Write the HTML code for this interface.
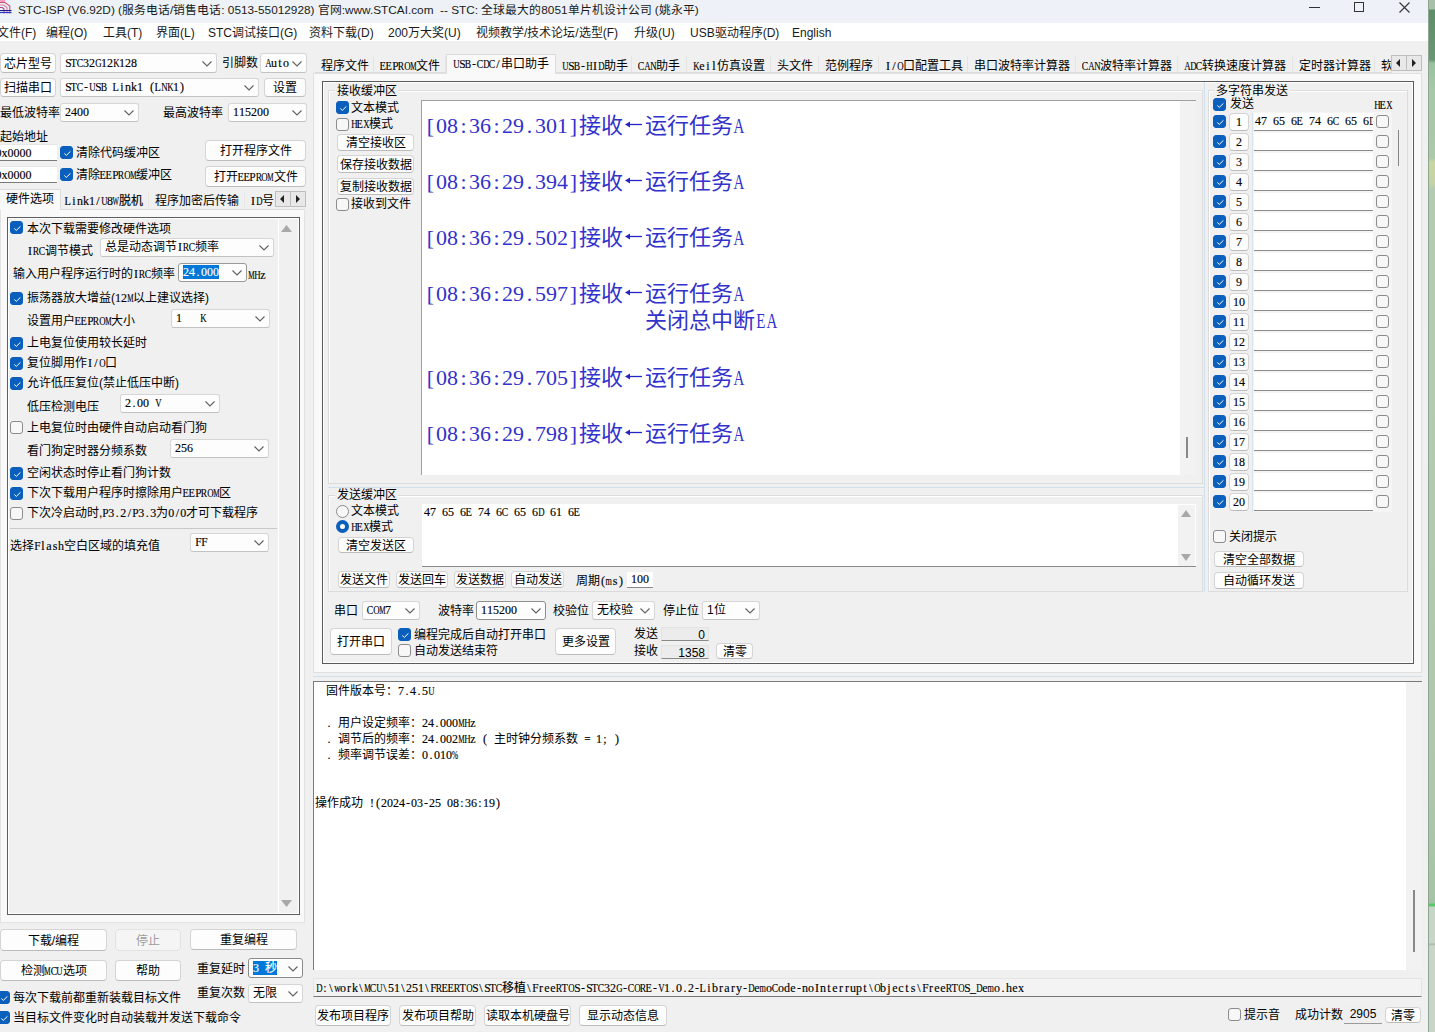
<!DOCTYPE html><html lang="zh-CN"><head><meta charset="utf-8"><title>STC-ISP</title><style>
*{margin:0;padding:0;box-sizing:border-box}
html,body{width:1435px;height:1032px;overflow:hidden;background:#f0f0f0}
body{position:relative;font-family:"Liberation Sans",sans-serif;font-size:12px;color:#000}
div{position:absolute;white-space:nowrap}
.u{font-family:"Liberation Sans",sans-serif;font-size:12px;line-height:14px}
.m{font-family:"Liberation Serif",serif;font-size:12px;letter-spacing:0;-webkit-text-stroke:0.15px}
.m i{font-style:normal;display:inline-flex;justify-content:center;width:6px}
.m i b{font-weight:normal;display:block}
.btn > span.u{position:relative;top:1px}
.btn{background:#fdfdfd;border:1px solid #d4d4d4;border-bottom-color:#bcbcbc;border-radius:4px;text-align:center}
.btn.dis{background:#f5f5f5;border-color:#e2e2e2;color:#9d9d9d}
.combo{background:#fdfdfd;border:1px solid #d6d6d6;border-bottom-color:#c2c2c2;border-radius:3px}
.edit{background:#fff;border-bottom:1px solid #8a8a8a;overflow:hidden}
.cbx{width:13px;height:13px;border:1px solid #8c8c8c;border-radius:3px;background:#f7f7f7}
.cbx.on{background:#0a5fbd;border-color:#0a5fbd}
.rad{width:13px;height:13px;border:1px solid #8c8c8c;border-radius:50%;background:#f7f7f7}
.rad.on{background:#fff;border:4px solid #0a5fbd}
.sel{background:#0078d7;color:#fff}
.rx{font-family:"Liberation Serif",serif;font-size:22px;color:#3232cc;line-height:28px}
.rx i{font-style:normal;display:inline-flex;justify-content:center}
</style></head><body><div style="left:0px;top:0px;width:1428px;height:23px;background:linear-gradient(90deg,#edf2f6,#eef1f8)"></div>
<svg style="position:absolute;left:0;top:0" width="12" height="15" viewBox="0 0 12 15"><rect x="0" y="0" width="5" height="2.5" fill="#f39cbc"/><path d="M0 2.5 H5 L9.8 6 V13.5" stroke="#c8507a" fill="none" stroke-width="1.1"/><path d="M0 5 H3.5 L7 7.5 V13.5" stroke="#e07aa0" fill="none" stroke-width="1.1"/><path d="M0 7.5 H2.5 L4 9 V13.5" stroke="#a04a90" fill="none" stroke-width="1.1"/><rect x="0" y="10" width="11.5" height="1.1" fill="#1c1c8c"/><rect x="0" y="12" width="11.5" height="1.1" fill="#2a3ac8"/></svg>
<div class="u" style="left:18px;top:3px;color:#1a1a1a;font-size:11.8px">STC-ISP (V6.92D) (服务电话/销售电话: 0513-55012928) 官网:www.STCAI.com&nbsp; -- STC: 全球最大的8051单片机设计公司 (姚永平)</div>
<div style="left:1309px;top:7px;width:11px;height:1px;background:#333"></div>
<div style="left:1354px;top:2px;width:10px;height:10px;border:1px solid #333"></div>
<svg style="position:absolute;left:1399px;top:2px" width="11" height="11" viewBox="0 0 11 11"><path d="M0.5 0.5 L10.5 10.5 M10.5 0.5 L0.5 10.5" stroke="#333" stroke-width="1.1"/></svg>
<div style="left:0px;top:23px;width:1428px;height:18px;background:#ffffff"></div>
<div class="u" style="left:-3px;top:26px;font-size:12px;color:#1a1a1a">文件(F)</div>
<div class="u" style="left:46px;top:26px;font-size:12px;color:#1a1a1a">编程(O)</div>
<div class="u" style="left:103px;top:26px;font-size:12px;color:#1a1a1a">工具(T)</div>
<div class="u" style="left:156px;top:26px;font-size:12px;color:#1a1a1a">界面(L)</div>
<div class="u" style="left:208px;top:26px;font-size:12px;color:#1a1a1a">STC调试接口(G)</div>
<div class="u" style="left:309px;top:26px;font-size:12px;color:#1a1a1a">资料下载(D)</div>
<div class="u" style="left:388px;top:26px;font-size:12px;color:#1a1a1a">200万大奖(U)</div>
<div class="u" style="left:476px;top:26px;font-size:12px;color:#1a1a1a">视频教学/技术论坛/选型(F)</div>
<div class="u" style="left:634px;top:26px;font-size:12px;color:#1a1a1a">升级(U)</div>
<div class="u" style="left:690px;top:26px;font-size:12px;color:#1a1a1a">USB驱动程序(D)</div>
<div class="u" style="left:792px;top:26px;font-size:12px;color:#1a1a1a">English</div>
<div style="left:1428px;top:0px;width:7px;height:1032px;background:linear-gradient(#a9bfaa 0,#a9bfaa 9px,#5e8d69 10px,#6a9775 60px,#98c29d 63px,#a8c8a8 90px,#acc9a9 158px,#c9d5a2 162px,#c5d3a5 183px,#b3cbb2 190px,#b2cab2 520px,#afc7af 780px,#a5c3a6 903px,#56cc66 904px,#56cc66 906px,#c8d5c9 907px,#c8d5c9 943px,#a9b5aa 944px,#c9d5ca 946px,#c9d5ca 1032px);box-shadow:inset 1px 0 0 #8ea58f"></div>
<div class="btn" style="left:0px;top:53px;width:56px;height:20px;line-height:18px;font-size:12px"><span class="u">芯片型号</span></div>
<div class="combo" style="left:60px;top:53px;width:157px;height:20px;line-height:18px;"><span class="m" style="position:absolute;left:4px;top:0px"><i><b style="transform:scaleX(0.953)">S</b></i><i><b style="transform:scaleX(0.868)">T</b></i><i><b style="transform:scaleX(0.795)">C</b></i><i>3</i><i>2</i><i><b style="transform:scaleX(0.734)">G</b></i><i>1</i><i>2</i><i><b style="transform:scaleX(0.734)">K</b></i><i>1</i><i>2</i><i>8</i></span><svg style="position:absolute;right:4px;top:7px" width="10" height="6" viewBox="0 0 10 6"><path d="M0.5 0.5 L5 5 L9.5 0.5" fill="none" stroke="#606060" stroke-width="1.1"/></svg></div>
<div class="u" style="left:222px;top:56px;font-size:12px">引脚数</div>
<div class="combo" style="left:260px;top:53px;width:47px;height:20px;line-height:18px;"><span class="m" style="position:absolute;left:4px;top:0px"><i><b style="transform:scaleX(0.734)">A</b></i><i>u</i><i>t</i><i>o</i></span><svg style="position:absolute;right:4px;top:7px" width="10" height="6" viewBox="0 0 10 6"><path d="M0.5 0.5 L5 5 L9.5 0.5" fill="none" stroke="#606060" stroke-width="1.1"/></svg></div>
<div class="btn" style="left:0px;top:78px;width:56px;height:19px;line-height:17px;font-size:12px"><span class="u">扫描串口</span></div>
<div class="combo" style="left:60px;top:78px;width:199px;height:19px;line-height:17px;"><span class="m" style="position:absolute;left:4px;top:0px"><i><b style="transform:scaleX(0.953)">S</b></i><i><b style="transform:scaleX(0.868)">T</b></i><i><b style="transform:scaleX(0.795)">C</b></i><i>-</i><i><b style="transform:scaleX(0.734)">U</b></i><i><b style="transform:scaleX(0.953)">S</b></i><i><b style="transform:scaleX(0.795)">B</b></i><i>&nbsp;</i><i><b style="transform:scaleX(0.868)">L</b></i><i>i</i><i>n</i><i>k</i><i>1</i><i>&nbsp;</i><i>(</i><i><b style="transform:scaleX(0.868)">L</b></i><i><b style="transform:scaleX(0.734)">N</b></i><i><b style="transform:scaleX(0.734)">K</b></i><i>1</i><i>)</i></span><svg style="position:absolute;right:4px;top:6px" width="10" height="6" viewBox="0 0 10 6"><path d="M0.5 0.5 L5 5 L9.5 0.5" fill="none" stroke="#606060" stroke-width="1.1"/></svg></div>
<div class="btn" style="left:264px;top:78px;width:42px;height:19px;line-height:17px;font-size:12px"><span class="u">设置</span></div>
<div class="u" style="left:0px;top:106px;font-size:12px">最低波特率</div>
<div class="combo" style="left:60px;top:103px;width:79px;height:19px;line-height:17px;"><span class="m" style="position:absolute;left:4px;top:0px"><i>2</i><i>4</i><i>0</i><i>0</i></span><svg style="position:absolute;right:4px;top:6px" width="10" height="6" viewBox="0 0 10 6"><path d="M0.5 0.5 L5 5 L9.5 0.5" fill="none" stroke="#606060" stroke-width="1.1"/></svg></div>
<div class="u" style="left:163px;top:106px;font-size:12px">最高波特率</div>
<div class="combo" style="left:228px;top:103px;width:79px;height:19px;line-height:17px;"><span class="m" style="position:absolute;left:4px;top:0px"><i>1</i><i>1</i><i>5</i><i>2</i><i>0</i><i>0</i></span><svg style="position:absolute;right:4px;top:6px" width="10" height="6" viewBox="0 0 10 6"><path d="M0.5 0.5 L5 5 L9.5 0.5" fill="none" stroke="#606060" stroke-width="1.1"/></svg></div>
<div class="u" style="left:0px;top:130px;font-size:12px">起始地址</div>
<div class="edit" style="left:0px;top:144px;width:57px;height:17px;line-height:16px;text-align:left;border-bottom:1px solid #7a7a7a;border-top:1px solid #e6e6e6;text-indent:-3px"><span class="m" style="padding:0 0px"><i>0</i><i>x</i><i>0</i><i>0</i><i>0</i><i>0</i></span></div>
<div class="cbx on" style="left:60px;top:146px"><svg width="13" height="13" viewBox="0 0 13 13" style="position:absolute;left:0;top:0"><path d="M3.3 6.5 L5.3 8.4 L9.4 4.4" fill="none" stroke="#fff" stroke-width="1"/></svg></div>
<div class="u" style="left:76px;top:146px;font-size:12px">清除代码缓冲区</div>
<div class="btn" style="left:205px;top:140px;width:101px;height:21px;line-height:19px;font-size:12px"><span class="u">打开程序文件</span></div>
<div class="edit" style="left:0px;top:166px;width:57px;height:17px;line-height:16px;text-align:left;border-bottom:1px solid #7a7a7a;border-top:1px solid #e6e6e6;text-indent:-3px"><span class="m" style="padding:0 0px"><i>0</i><i>x</i><i>0</i><i>0</i><i>0</i><i>0</i></span></div>
<div class="cbx on" style="left:60px;top:168px"><svg width="13" height="13" viewBox="0 0 13 13" style="position:absolute;left:0;top:0"><path d="M3.3 6.5 L5.3 8.4 L9.4 4.4" fill="none" stroke="#fff" stroke-width="1"/></svg></div>
<div class="u" style="left:76px;top:168px;font-size:12px">清除<span class="m"><i><b style="transform:scaleX(0.868)">E</b></i><i><b style="transform:scaleX(0.868)">E</b></i><i><b style="transform:scaleX(0.953)">P</b></i><i><b style="transform:scaleX(0.795)">R</b></i><i><b style="transform:scaleX(0.734)">O</b></i><i><b style="transform:scaleX(0.596)">M</b></i></span>缓冲区</div>
<div class="btn" style="left:205px;top:166px;width:101px;height:21px;line-height:19px;font-size:12px"><span class="u">打开<span class="m"><i><b style="transform:scaleX(0.868)">E</b></i><i><b style="transform:scaleX(0.868)">E</b></i><i><b style="transform:scaleX(0.953)">P</b></i><i><b style="transform:scaleX(0.795)">R</b></i><i><b style="transform:scaleX(0.734)">O</b></i><i><b style="transform:scaleX(0.596)">M</b></i></span>文件</span></div>
<div style="left:0px;top:209px;width:305px;height:714px;background:#f9f9f9;border:1px solid #e3e3e3;border-top-color:#dcdcdc"></div>
<div style="left:0px;top:189px;width:61px;height:21px;background:#f9f9f9;border:1px solid #dcdcdc;border-bottom:none;border-left:none"></div>
<div class="u" style="left:6px;top:192px;font-size:12px">硬件选项</div>
<div style="left:61px;top:192px;width:88px;height:17px;background:#f0f0f0;border-right:1px solid #e6e6e6"></div>
<div class="m" style="left:65px;top:191px;"><i><b style="transform:scaleX(0.868)">L</b></i><i>i</i><i>n</i><i>k</i><i>1</i><i>/</i><i><b style="transform:scaleX(0.734)">U</b></i><i>8</i><i><b style="transform:scaleX(0.562)">W</b></i><i style="width:12px">脱</i><i style="width:12px">机</i></div>
<div style="left:149px;top:192px;width:96px;height:17px;background:#f0f0f0;border-right:1px solid #e6e6e6"></div>
<div class="u" style="left:155px;top:194px;font-size:12px">程序加密后传输</div>
<div style="left:245px;top:192px;width:30px;height:17px;background:#f0f0f0"></div>
<div class="u" style="left:250px;top:194px;font-size:12px"><span class="m"><i>I</i><i><b style="transform:scaleX(0.734)">D</b></i></span>号</div>
<div style="left:275px;top:191px;width:16px;height:16px;background:#e8e8e8;border:1px solid #bdbdbd"></div>
<div style="left:290px;top:191px;width:16px;height:16px;background:#e8e8e8;border:1px solid #bdbdbd"></div>
<svg style="position:absolute;left:280px;top:195px" width="6" height="8"><path d="M4 0 L0 4 L4 8Z" fill="#222"/></svg>
<svg style="position:absolute;left:296px;top:195px" width="6" height="8"><path d="M0 0 L4 4 L0 8Z" fill="#222"/></svg>
<div style="left:7px;top:217px;width:293px;height:698px;background:#f0f0f0;border:1px solid #5e5e5e;box-shadow:inset 0 0 0 1px #fff"></div>
<div style="left:278px;top:219px;width:1px;height:694px;background:#fff"></div>
<svg style="position:absolute;left:281px;top:225px" width="11" height="8"><path d="M0 7 L5.5 0 L11 7Z" fill="#a8a8a8"/></svg>
<svg style="position:absolute;left:281px;top:900px" width="11" height="8"><path d="M0 0 L5.5 7 L11 0Z" fill="#a8a8a8"/></svg>
<div class="cbx on" style="left:10px;top:221px"><svg width="13" height="13" viewBox="0 0 13 13" style="position:absolute;left:0;top:0"><path d="M3.3 6.5 L5.3 8.4 L9.4 4.4" fill="none" stroke="#fff" stroke-width="1"/></svg></div>
<div class="u" style="left:27px;top:222px;font-size:12px">本次下载需要修改硬件选项</div>
<div class="u" style="left:27px;top:244px;font-size:12px"><span class="m"><i>I</i><i><b style="transform:scaleX(0.795)">R</b></i><i><b style="transform:scaleX(0.795)">C</b></i></span>调节模式</div>
<div class="combo" style="left:100px;top:238px;width:174px;height:19px;line-height:17px;font-size:12px"><span class="u" style="position:absolute;left:4px;top:1px">总是动态调节<span class="m"><i>I</i><i><b style="transform:scaleX(0.795)">R</b></i><i><b style="transform:scaleX(0.795)">C</b></i></span>频率</span><svg style="position:absolute;right:4px;top:6px" width="10" height="6" viewBox="0 0 10 6"><path d="M0.5 0.5 L5 5 L9.5 0.5" fill="none" stroke="#606060" stroke-width="1.1"/></svg></div>
<div class="u" style="left:13px;top:267px;font-size:12px">输入用户程序运行时的<span class="m"><i>I</i><i><b style="transform:scaleX(0.795)">R</b></i><i><b style="transform:scaleX(0.795)">C</b></i></span>频率</div>
<div class="combo" style="left:178px;top:263px;width:69px;height:19px;line-height:17px;border-color:#9a9a9a"><span class="m" style="position:absolute;left:4px;top:0px"><span class="sel"><i>2</i><i>4</i><i>.</i><i>0</i><i>0</i><i>0</i></span></span><svg style="position:absolute;right:4px;top:6px" width="10" height="6" viewBox="0 0 10 6"><path d="M0.5 0.5 L5 5 L9.5 0.5" fill="none" stroke="#606060" stroke-width="1.1"/></svg></div>
<div class="m" style="left:248px;top:268px;"><i><b style="transform:scaleX(0.596)">M</b></i><i><b style="transform:scaleX(0.734)">H</b></i><i>z</i></div>
<div class="cbx on" style="left:10px;top:292px"><svg width="13" height="13" viewBox="0 0 13 13" style="position:absolute;left:0;top:0"><path d="M3.3 6.5 L5.3 8.4 L9.4 4.4" fill="none" stroke="#fff" stroke-width="1"/></svg></div>
<div class="u" style="left:27px;top:291px;font-size:12px">振荡器放大增益(<span class="m"><i>1</i><i>2</i><i><b style="transform:scaleX(0.596)">M</b></i></span>以上建议选择)</div>
<div class="u" style="left:27px;top:314px;font-size:12px">设置用户<span class="m"><i><b style="transform:scaleX(0.868)">E</b></i><i><b style="transform:scaleX(0.868)">E</b></i><i><b style="transform:scaleX(0.953)">P</b></i><i><b style="transform:scaleX(0.795)">R</b></i><i><b style="transform:scaleX(0.734)">O</b></i><i><b style="transform:scaleX(0.596)">M</b></i></span>大小</div>
<div class="combo" style="left:171px;top:309px;width:99px;height:19px;line-height:17px;"><span class="m" style="position:absolute;left:4px;top:0px"><i>1</i><i>&nbsp;</i><i>&nbsp;</i><i>&nbsp;</i><i><b style="transform:scaleX(0.734)">K</b></i></span><svg style="position:absolute;right:4px;top:6px" width="10" height="6" viewBox="0 0 10 6"><path d="M0.5 0.5 L5 5 L9.5 0.5" fill="none" stroke="#606060" stroke-width="1.1"/></svg></div>
<div class="cbx on" style="left:10px;top:337px"><svg width="13" height="13" viewBox="0 0 13 13" style="position:absolute;left:0;top:0"><path d="M3.3 6.5 L5.3 8.4 L9.4 4.4" fill="none" stroke="#fff" stroke-width="1"/></svg></div>
<div class="u" style="left:27px;top:336px;font-size:12px">上电复位使用较长延时</div>
<div class="cbx on" style="left:10px;top:357px"><svg width="13" height="13" viewBox="0 0 13 13" style="position:absolute;left:0;top:0"><path d="M3.3 6.5 L5.3 8.4 L9.4 4.4" fill="none" stroke="#fff" stroke-width="1"/></svg></div>
<div class="u" style="left:27px;top:356px;font-size:12px">复位脚用作<span class="m"><i>I</i><i>/</i><i><b style="transform:scaleX(0.734)">O</b></i></span>口</div>
<div class="cbx on" style="left:10px;top:377px"><svg width="13" height="13" viewBox="0 0 13 13" style="position:absolute;left:0;top:0"><path d="M3.3 6.5 L5.3 8.4 L9.4 4.4" fill="none" stroke="#fff" stroke-width="1"/></svg></div>
<div class="u" style="left:27px;top:376px;font-size:12px">允许低压复位(禁止低压中断)</div>
<div class="u" style="left:27px;top:400px;font-size:12px">低压检测电压</div>
<div class="combo" style="left:120px;top:394px;width:100px;height:19px;line-height:17px;"><span class="m" style="position:absolute;left:4px;top:0px"><i>2</i><i>.</i><i>0</i><i>0</i><i>&nbsp;</i><i><b style="transform:scaleX(0.734)">V</b></i></span><svg style="position:absolute;right:4px;top:6px" width="10" height="6" viewBox="0 0 10 6"><path d="M0.5 0.5 L5 5 L9.5 0.5" fill="none" stroke="#606060" stroke-width="1.1"/></svg></div>
<div class="cbx" style="left:10px;top:421px"></div>
<div class="u" style="left:27px;top:421px;font-size:12px">上电复位时由硬件自动启动看门狗</div>
<div class="u" style="left:27px;top:444px;font-size:12px">看门狗定时器分频系数</div>
<div class="combo" style="left:170px;top:439px;width:99px;height:19px;line-height:17px;"><span class="m" style="position:absolute;left:4px;top:0px"><i>2</i><i>5</i><i>6</i></span><svg style="position:absolute;right:4px;top:6px" width="10" height="6" viewBox="0 0 10 6"><path d="M0.5 0.5 L5 5 L9.5 0.5" fill="none" stroke="#606060" stroke-width="1.1"/></svg></div>
<div class="cbx on" style="left:10px;top:467px"><svg width="13" height="13" viewBox="0 0 13 13" style="position:absolute;left:0;top:0"><path d="M3.3 6.5 L5.3 8.4 L9.4 4.4" fill="none" stroke="#fff" stroke-width="1"/></svg></div>
<div class="u" style="left:27px;top:466px;font-size:12px">空闲状态时停止看门狗计数</div>
<div class="cbx on" style="left:10px;top:487px"><svg width="13" height="13" viewBox="0 0 13 13" style="position:absolute;left:0;top:0"><path d="M3.3 6.5 L5.3 8.4 L9.4 4.4" fill="none" stroke="#fff" stroke-width="1"/></svg></div>
<div class="u" style="left:27px;top:486px;font-size:12px">下次下载用户程序时擦除用户<span class="m"><i><b style="transform:scaleX(0.868)">E</b></i><i><b style="transform:scaleX(0.868)">E</b></i><i><b style="transform:scaleX(0.953)">P</b></i><i><b style="transform:scaleX(0.795)">R</b></i><i><b style="transform:scaleX(0.734)">O</b></i><i><b style="transform:scaleX(0.596)">M</b></i></span>区</div>
<div class="cbx" style="left:10px;top:507px"></div>
<div class="u" style="left:27px;top:506px;font-size:12px">下次冷启动时,<span class="m"><i><b style="transform:scaleX(0.953)">P</b></i><i>3</i><i>.</i><i>2</i><i>/</i><i><b style="transform:scaleX(0.953)">P</b></i><i>3</i><i>.</i><i>3</i></span>为<span class="m"><i>0</i><i>/</i><i>0</i></span>才可下载程序</div>
<div style="left:10px;top:528px;width:267px;height:1px;background:#c8c8c8"></div>
<div class="u" style="left:10px;top:539px;font-size:12px">选择<span class="m"><i><b style="transform:scaleX(0.953)">F</b></i><i>l</i><i>a</i><i>s</i><i>h</i></span>空白区域的填充值</div>
<div class="combo" style="left:190px;top:533px;width:79px;height:19px;line-height:17px;"><span class="m" style="position:absolute;left:4px;top:0px"><i><b style="transform:scaleX(0.953)">F</b></i><i><b style="transform:scaleX(0.953)">F</b></i></span><svg style="position:absolute;right:4px;top:6px" width="10" height="6" viewBox="0 0 10 6"><path d="M0.5 0.5 L5 5 L9.5 0.5" fill="none" stroke="#606060" stroke-width="1.1"/></svg></div>
<div class="btn" style="left:0px;top:929px;width:107px;height:22px;line-height:20px;font-size:12px"><span class="u">下载/编程</span></div>
<div class="btn dis" style="left:115px;top:929px;width:66px;height:22px;line-height:20px;font-size:12px"><span class="u">停止</span></div>
<div class="btn" style="left:190px;top:929px;width:107px;height:21px;line-height:19px;font-size:12px"><span class="u">重复编程</span></div>
<div class="btn" style="left:0px;top:960px;width:107px;height:21px;line-height:19px;font-size:12px"><span class="u">检测<span class="m"><i><b style="transform:scaleX(0.596)">M</b></i><i><b style="transform:scaleX(0.795)">C</b></i><i><b style="transform:scaleX(0.734)">U</b></i></span>选项</span></div>
<div class="btn" style="left:115px;top:960px;width:66px;height:21px;line-height:19px;font-size:12px"><span class="u">帮助</span></div>
<div class="u" style="left:197px;top:962px;font-size:12px">重复延时</div>
<div class="combo" style="left:248px;top:958px;width:55px;height:20px;line-height:18px;border-color:#8a8a8a"><span class="m" style="position:absolute;left:4px;top:0px"><span class="sel"><i>3</i><i>&nbsp;</i><i style="width:12px">秒</i></span></span><svg style="position:absolute;right:4px;top:7px" width="10" height="6" viewBox="0 0 10 6"><path d="M0.5 0.5 L5 5 L9.5 0.5" fill="none" stroke="#606060" stroke-width="1.1"/></svg></div>
<div class="u" style="left:197px;top:986px;font-size:12px">重复次数</div>
<div class="combo" style="left:248px;top:984px;width:55px;height:19px;line-height:17px;font-size:12px"><span class="u" style="position:absolute;left:4px;top:1px">无限</span><svg style="position:absolute;right:4px;top:6px" width="10" height="6" viewBox="0 0 10 6"><path d="M0.5 0.5 L5 5 L9.5 0.5" fill="none" stroke="#606060" stroke-width="1.1"/></svg></div>
<div class="cbx on" style="left:-3px;top:991px"><svg width="13" height="13" viewBox="0 0 13 13" style="position:absolute;left:0;top:0"><path d="M3.3 6.5 L5.3 8.4 L9.4 4.4" fill="none" stroke="#fff" stroke-width="1"/></svg></div>
<div class="u" style="left:13px;top:991px;font-size:12px">每次下载前都重新装载目标文件</div>
<div class="cbx on" style="left:-3px;top:1011px"><svg width="13" height="13" viewBox="0 0 13 13" style="position:absolute;left:0;top:0"><path d="M3.3 6.5 L5.3 8.4 L9.4 4.4" fill="none" stroke="#fff" stroke-width="1"/></svg></div>
<div class="u" style="left:13px;top:1011px;font-size:12px">当目标文件变化时自动装载并发送下载命令</div>
<div style="left:313px;top:73px;width:1109px;height:600px;background:#f9f9f9;border:1px solid #e0e0e0"></div>
<div style="left:315px;top:56px;width:59px;height:17px;background:#f0f0f0;border-right:1px solid #e4e4e4;border-bottom:1px solid #dcdcdc"></div>
<div class="u" style="left:321px;top:59px;font-size:12px;overflow:hidden;width:53px">程序文件</div>
<div style="left:374px;top:56px;width:72px;height:17px;background:#f0f0f0;border-right:1px solid #e4e4e4;border-bottom:1px solid #dcdcdc"></div>
<div class="u" style="left:380px;top:59px;font-size:12px;overflow:hidden;width:66px"><span class="m"><i><b style="transform:scaleX(0.868)">E</b></i><i><b style="transform:scaleX(0.868)">E</b></i><i><b style="transform:scaleX(0.953)">P</b></i><i><b style="transform:scaleX(0.795)">R</b></i><i><b style="transform:scaleX(0.734)">O</b></i><i><b style="transform:scaleX(0.596)">M</b></i></span>文件</div>
<div style="left:446px;top:54px;width:110px;height:20px;background:#f9f9f9;border:1px solid #dcdcdc;border-bottom:none"></div>
<div class="u" style="left:453px;top:57px;font-size:12px"><span class="m"><i><b style="transform:scaleX(0.734)">U</b></i><i><b style="transform:scaleX(0.953)">S</b></i><i><b style="transform:scaleX(0.795)">B</b></i><i>-</i><i><b style="transform:scaleX(0.795)">C</b></i><i><b style="transform:scaleX(0.734)">D</b></i><i><b style="transform:scaleX(0.795)">C</b></i><i>/</i></span>串口助手</div>
<div style="left:556px;top:56px;width:76px;height:17px;background:#f0f0f0;border-right:1px solid #e4e4e4;border-bottom:1px solid #dcdcdc"></div>
<div class="u" style="left:562px;top:59px;font-size:12px;overflow:hidden;width:70px"><span class="m"><i><b style="transform:scaleX(0.734)">U</b></i><i><b style="transform:scaleX(0.953)">S</b></i><i><b style="transform:scaleX(0.795)">B</b></i><i>-</i><i><b style="transform:scaleX(0.734)">H</b></i><i>I</i><i><b style="transform:scaleX(0.734)">D</b></i></span>助手</div>
<div style="left:632px;top:56px;width:55px;height:17px;background:#f0f0f0;border-right:1px solid #e4e4e4;border-bottom:1px solid #dcdcdc"></div>
<div class="u" style="left:638px;top:59px;font-size:12px;overflow:hidden;width:49px"><span class="m"><i><b style="transform:scaleX(0.795)">C</b></i><i><b style="transform:scaleX(0.734)">A</b></i><i><b style="transform:scaleX(0.734)">N</b></i></span>助手</div>
<div style="left:687px;top:56px;width:84px;height:17px;background:#f0f0f0;border-right:1px solid #e4e4e4;border-bottom:1px solid #dcdcdc"></div>
<div class="u" style="left:693px;top:59px;font-size:12px;overflow:hidden;width:78px"><span class="m"><i><b style="transform:scaleX(0.734)">K</b></i><i>e</i><i>i</i><i>l</i></span>仿真设置</div>
<div style="left:771px;top:56px;width:48px;height:17px;background:#f0f0f0;border-right:1px solid #e4e4e4;border-bottom:1px solid #dcdcdc"></div>
<div class="u" style="left:777px;top:59px;font-size:12px;overflow:hidden;width:42px">头文件</div>
<div style="left:819px;top:56px;width:60px;height:17px;background:#f0f0f0;border-right:1px solid #e4e4e4;border-bottom:1px solid #dcdcdc"></div>
<div class="u" style="left:825px;top:59px;font-size:12px;overflow:hidden;width:54px">范例程序</div>
<div style="left:879px;top:56px;width:89px;height:17px;background:#f0f0f0;border-right:1px solid #e4e4e4;border-bottom:1px solid #dcdcdc"></div>
<div class="u" style="left:885px;top:59px;font-size:12px;overflow:hidden;width:83px"><span class="m"><i>I</i><i>/</i><i><b style="transform:scaleX(0.734)">O</b></i></span>口配置工具</div>
<div style="left:968px;top:56px;width:108px;height:17px;background:#f0f0f0;border-right:1px solid #e4e4e4;border-bottom:1px solid #dcdcdc"></div>
<div class="u" style="left:974px;top:59px;font-size:12px;overflow:hidden;width:102px">串口波特率计算器</div>
<div style="left:1076px;top:56px;width:102px;height:17px;background:#f0f0f0;border-right:1px solid #e4e4e4;border-bottom:1px solid #dcdcdc"></div>
<div class="u" style="left:1082px;top:59px;font-size:12px;overflow:hidden;width:96px"><span class="m"><i><b style="transform:scaleX(0.795)">C</b></i><i><b style="transform:scaleX(0.734)">A</b></i><i><b style="transform:scaleX(0.734)">N</b></i></span>波特率计算器</div>
<div style="left:1178px;top:56px;width:115px;height:17px;background:#f0f0f0;border-right:1px solid #e4e4e4;border-bottom:1px solid #dcdcdc"></div>
<div class="u" style="left:1184px;top:59px;font-size:12px;overflow:hidden;width:109px"><span class="m"><i><b style="transform:scaleX(0.734)">A</b></i><i><b style="transform:scaleX(0.734)">D</b></i><i><b style="transform:scaleX(0.795)">C</b></i></span>转换速度计算器</div>
<div style="left:1293px;top:56px;width:82px;height:17px;background:#f0f0f0;border-right:1px solid #e4e4e4;border-bottom:1px solid #dcdcdc"></div>
<div class="u" style="left:1299px;top:59px;font-size:12px;overflow:hidden;width:76px">定时器计算器</div>
<div style="left:1375px;top:56px;width:17px;height:17px;background:#f0f0f0;border-right:1px solid #e4e4e4;border-bottom:1px solid #dcdcdc"></div>
<div class="u" style="left:1381px;top:59px;font-size:12px;overflow:hidden;width:11px">软</div>
<div style="left:1391px;top:55px;width:16px;height:16px;background:#e8e8e8;border:1px solid #bdbdbd"></div>
<div style="left:1406px;top:55px;width:16px;height:16px;background:#e8e8e8;border:1px solid #bdbdbd"></div>
<svg style="position:absolute;left:1396px;top:59px" width="6" height="8"><path d="M4 0 L0 4 L4 8Z" fill="#222"/></svg>
<svg style="position:absolute;left:1412px;top:59px" width="6" height="8"><path d="M0 0 L4 4 L0 8Z" fill="#222"/></svg>
<div style="left:322px;top:81px;width:1092px;height:583px;background:#f0f0f0;border:1px solid #5a5a5a;box-shadow:inset 0 0 0 1px #fff"></div>
<div style="left:328px;top:90px;width:875px;height:394px;border:1px solid #dcdcdc;box-shadow:inset 1px 1px 0 #fff"></div>
<div style="left:335px;top:83px;width:63px;height:14px;background:#f0f0f0"></div>
<div class="u" style="left:337px;top:84px;font-size:12px">接收缓冲区</div>
<div class="cbx on" style="left:336px;top:101px"><svg width="13" height="13" viewBox="0 0 13 13" style="position:absolute;left:0;top:0"><path d="M3.3 6.5 L5.3 8.4 L9.4 4.4" fill="none" stroke="#fff" stroke-width="1"/></svg></div>
<div class="u" style="left:351px;top:101px;font-size:12px">文本模式</div>
<div class="cbx" style="left:336px;top:118px"></div>
<div class="u" style="left:351px;top:117px;font-size:12px"><span class="m"><i><b style="transform:scaleX(0.734)">H</b></i><i><b style="transform:scaleX(0.868)">E</b></i><i><b style="transform:scaleX(0.734)">X</b></i></span>模式</div>
<div class="btn" style="left:337px;top:134px;width:77px;height:17px;line-height:15px;font-size:12px"><span class="u">清空接收区</span></div>
<div class="btn" style="left:337px;top:155px;width:77px;height:18px;line-height:16px;font-size:12px"><span class="u">保存接收数据</span></div>
<div class="btn" style="left:337px;top:178px;width:77px;height:17px;line-height:15px;font-size:12px"><span class="u">复制接收数据</span></div>
<div class="cbx" style="left:336px;top:198px"></div>
<div class="u" style="left:351px;top:197px;font-size:12px">接收到文件</div>
<div style="left:421px;top:100px;width:775px;height:375px;background:#fff;border-left:1px solid #a0a0a0;border-top:1px solid #a0a0a0"></div>
<div style="left:1180px;top:101px;width:16px;height:374px;background:#f2f2f2"></div>
<div style="left:1186px;top:437px;width:2px;height:21px;background:#888"></div>
<div class="rx" style="left:425px;top:111px"><i style="width:11px">[</i><i style="width:11px">0</i><i style="width:11px">8</i><i style="width:11px">:</i><i style="width:11px">3</i><i style="width:11px">6</i><i style="width:11px">:</i><i style="width:11px">2</i><i style="width:11px">9</i><i style="width:11px">.</i><i style="width:11px">3</i><i style="width:11px">0</i><i style="width:11px">1</i><i style="width:11px">]</i><i style="width:22px">接</i><i style="width:22px">收</i><i style="width:22px"><svg width="22" height="22" viewBox="0 0 22 22" style="position:relative;top:3px"><path d="M5 10.5 H19" stroke="#2626c8" stroke-width="1.3"/><path d="M2 10.5 L7 7.5 L7 13.5Z" fill="#2626c8"/></svg></i><i style="width:22px">运</i><i style="width:22px">行</i><i style="width:22px">任</i><i style="width:22px">务</i><i style="width:11px"><i style="transform:scaleX(0.68)">A</i></i></div>
<div class="rx" style="left:425px;top:167px"><i style="width:11px">[</i><i style="width:11px">0</i><i style="width:11px">8</i><i style="width:11px">:</i><i style="width:11px">3</i><i style="width:11px">6</i><i style="width:11px">:</i><i style="width:11px">2</i><i style="width:11px">9</i><i style="width:11px">.</i><i style="width:11px">3</i><i style="width:11px">9</i><i style="width:11px">4</i><i style="width:11px">]</i><i style="width:22px">接</i><i style="width:22px">收</i><i style="width:22px"><svg width="22" height="22" viewBox="0 0 22 22" style="position:relative;top:3px"><path d="M5 10.5 H19" stroke="#2626c8" stroke-width="1.3"/><path d="M2 10.5 L7 7.5 L7 13.5Z" fill="#2626c8"/></svg></i><i style="width:22px">运</i><i style="width:22px">行</i><i style="width:22px">任</i><i style="width:22px">务</i><i style="width:11px"><i style="transform:scaleX(0.68)">A</i></i></div>
<div class="rx" style="left:425px;top:223px"><i style="width:11px">[</i><i style="width:11px">0</i><i style="width:11px">8</i><i style="width:11px">:</i><i style="width:11px">3</i><i style="width:11px">6</i><i style="width:11px">:</i><i style="width:11px">2</i><i style="width:11px">9</i><i style="width:11px">.</i><i style="width:11px">5</i><i style="width:11px">0</i><i style="width:11px">2</i><i style="width:11px">]</i><i style="width:22px">接</i><i style="width:22px">收</i><i style="width:22px"><svg width="22" height="22" viewBox="0 0 22 22" style="position:relative;top:3px"><path d="M5 10.5 H19" stroke="#2626c8" stroke-width="1.3"/><path d="M2 10.5 L7 7.5 L7 13.5Z" fill="#2626c8"/></svg></i><i style="width:22px">运</i><i style="width:22px">行</i><i style="width:22px">任</i><i style="width:22px">务</i><i style="width:11px"><i style="transform:scaleX(0.68)">A</i></i></div>
<div class="rx" style="left:425px;top:279px"><i style="width:11px">[</i><i style="width:11px">0</i><i style="width:11px">8</i><i style="width:11px">:</i><i style="width:11px">3</i><i style="width:11px">6</i><i style="width:11px">:</i><i style="width:11px">2</i><i style="width:11px">9</i><i style="width:11px">.</i><i style="width:11px">5</i><i style="width:11px">9</i><i style="width:11px">7</i><i style="width:11px">]</i><i style="width:22px">接</i><i style="width:22px">收</i><i style="width:22px"><svg width="22" height="22" viewBox="0 0 22 22" style="position:relative;top:3px"><path d="M5 10.5 H19" stroke="#2626c8" stroke-width="1.3"/><path d="M2 10.5 L7 7.5 L7 13.5Z" fill="#2626c8"/></svg></i><i style="width:22px">运</i><i style="width:22px">行</i><i style="width:22px">任</i><i style="width:22px">务</i><i style="width:11px"><i style="transform:scaleX(0.68)">A</i></i></div>
<div class="rx" style="left:645px;top:307px"><i style="width:22px">关</i><i style="width:22px">闭</i><i style="width:22px">总</i><i style="width:22px">中</i><i style="width:22px">断</i><i style="width:11px"><i style="transform:scaleX(0.68)">E</i></i><i style="width:11px"><i style="transform:scaleX(0.68)">A</i></i></div>
<div class="rx" style="left:425px;top:363px"><i style="width:11px">[</i><i style="width:11px">0</i><i style="width:11px">8</i><i style="width:11px">:</i><i style="width:11px">3</i><i style="width:11px">6</i><i style="width:11px">:</i><i style="width:11px">2</i><i style="width:11px">9</i><i style="width:11px">.</i><i style="width:11px">7</i><i style="width:11px">0</i><i style="width:11px">5</i><i style="width:11px">]</i><i style="width:22px">接</i><i style="width:22px">收</i><i style="width:22px"><svg width="22" height="22" viewBox="0 0 22 22" style="position:relative;top:3px"><path d="M5 10.5 H19" stroke="#2626c8" stroke-width="1.3"/><path d="M2 10.5 L7 7.5 L7 13.5Z" fill="#2626c8"/></svg></i><i style="width:22px">运</i><i style="width:22px">行</i><i style="width:22px">任</i><i style="width:22px">务</i><i style="width:11px"><i style="transform:scaleX(0.68)">A</i></i></div>
<div class="rx" style="left:425px;top:419px"><i style="width:11px">[</i><i style="width:11px">0</i><i style="width:11px">8</i><i style="width:11px">:</i><i style="width:11px">3</i><i style="width:11px">6</i><i style="width:11px">:</i><i style="width:11px">2</i><i style="width:11px">9</i><i style="width:11px">.</i><i style="width:11px">7</i><i style="width:11px">9</i><i style="width:11px">8</i><i style="width:11px">]</i><i style="width:22px">接</i><i style="width:22px">收</i><i style="width:22px"><svg width="22" height="22" viewBox="0 0 22 22" style="position:relative;top:3px"><path d="M5 10.5 H19" stroke="#2626c8" stroke-width="1.3"/><path d="M2 10.5 L7 7.5 L7 13.5Z" fill="#2626c8"/></svg></i><i style="width:22px">运</i><i style="width:22px">行</i><i style="width:22px">任</i><i style="width:22px">务</i><i style="width:11px"><i style="transform:scaleX(0.68)">A</i></i></div>
<div style="left:328px;top:487px;width:876px;height:1px;background:#cfe0ec"></div>
<div style="left:1204px;top:82px;width:1px;height:510px;background:#cfe0ec"></div>
<div style="left:1208px;top:90px;width:200px;height:502px;border:1px solid #dcdcdc;box-shadow:inset 1px 1px 0 #fff"></div>
<div style="left:1214px;top:83px;width:76px;height:14px;background:#f0f0f0"></div>
<div class="u" style="left:1216px;top:84px;font-size:12px">多字符串发送</div>
<div class="cbx on" style="left:1213px;top:98px"><svg width="13" height="13" viewBox="0 0 13 13" style="position:absolute;left:0;top:0"><path d="M3.3 6.5 L5.3 8.4 L9.4 4.4" fill="none" stroke="#fff" stroke-width="1"/></svg></div>
<div class="u" style="left:1230px;top:97px;font-size:12px">发送</div>
<div class="m" style="left:1374px;top:98px;"><i><b style="transform:scaleX(0.734)">H</b></i><i><b style="transform:scaleX(0.868)">E</b></i><i><b style="transform:scaleX(0.734)">X</b></i></div>
<div style="left:1253px;top:112px;width:139px;height:400px;background:#f5f5f5"></div>
<div style="left:1252px;top:113px;width:1px;height:399px;background:#d5e3ee"></div>
<div class="cbx on" style="left:1213px;top:115px"><svg width="13" height="13" viewBox="0 0 13 13" style="position:absolute;left:0;top:0"><path d="M3.3 6.5 L5.3 8.4 L9.4 4.4" fill="none" stroke="#fff" stroke-width="1"/></svg></div>
<div class="btn" style="left:1229px;top:113px;width:20px;height:18px;line-height:16px;"><span class="m"><i>1</i></span></div>
<div class="edit" style="left:1254px;top:113px;width:119px;height:18px;line-height:17px;text-align:left;border-bottom:1px solid #8a8a8a"><span class="m" style="padding:0 1px"><i>4</i><i>7</i><i>&nbsp;</i><i>6</i><i>5</i><i>&nbsp;</i><i>6</i><i><b style="transform:scaleX(0.868)">E</b></i><i>&nbsp;</i><i>7</i><i>4</i><i>&nbsp;</i><i>6</i><i><b style="transform:scaleX(0.795)">C</b></i><i>&nbsp;</i><i>6</i><i>5</i><i>&nbsp;</i><i>6</i><i><b style="transform:scaleX(0.734)">D</b></i></span></div>
<div class="cbx" style="left:1376px;top:115px"></div>
<div class="cbx on" style="left:1213px;top:135px"><svg width="13" height="13" viewBox="0 0 13 13" style="position:absolute;left:0;top:0"><path d="M3.3 6.5 L5.3 8.4 L9.4 4.4" fill="none" stroke="#fff" stroke-width="1"/></svg></div>
<div class="btn" style="left:1229px;top:133px;width:20px;height:18px;line-height:16px;"><span class="m"><i>2</i></span></div>
<div class="edit" style="left:1254px;top:133px;width:119px;height:18px;line-height:17px;text-align:left;border-bottom:1px solid #8a8a8a"><span class="m" style="padding:0 1px"></span></div>
<div class="cbx" style="left:1376px;top:135px"></div>
<div class="cbx on" style="left:1213px;top:155px"><svg width="13" height="13" viewBox="0 0 13 13" style="position:absolute;left:0;top:0"><path d="M3.3 6.5 L5.3 8.4 L9.4 4.4" fill="none" stroke="#fff" stroke-width="1"/></svg></div>
<div class="btn" style="left:1229px;top:153px;width:20px;height:18px;line-height:16px;"><span class="m"><i>3</i></span></div>
<div class="edit" style="left:1254px;top:153px;width:119px;height:18px;line-height:17px;text-align:left;border-bottom:1px solid #8a8a8a"><span class="m" style="padding:0 1px"></span></div>
<div class="cbx" style="left:1376px;top:155px"></div>
<div class="cbx on" style="left:1213px;top:175px"><svg width="13" height="13" viewBox="0 0 13 13" style="position:absolute;left:0;top:0"><path d="M3.3 6.5 L5.3 8.4 L9.4 4.4" fill="none" stroke="#fff" stroke-width="1"/></svg></div>
<div class="btn" style="left:1229px;top:173px;width:20px;height:18px;line-height:16px;"><span class="m"><i>4</i></span></div>
<div class="edit" style="left:1254px;top:173px;width:119px;height:18px;line-height:17px;text-align:left;border-bottom:1px solid #8a8a8a"><span class="m" style="padding:0 1px"></span></div>
<div class="cbx" style="left:1376px;top:175px"></div>
<div class="cbx on" style="left:1213px;top:195px"><svg width="13" height="13" viewBox="0 0 13 13" style="position:absolute;left:0;top:0"><path d="M3.3 6.5 L5.3 8.4 L9.4 4.4" fill="none" stroke="#fff" stroke-width="1"/></svg></div>
<div class="btn" style="left:1229px;top:193px;width:20px;height:18px;line-height:16px;"><span class="m"><i>5</i></span></div>
<div class="edit" style="left:1254px;top:193px;width:119px;height:18px;line-height:17px;text-align:left;border-bottom:1px solid #8a8a8a"><span class="m" style="padding:0 1px"></span></div>
<div class="cbx" style="left:1376px;top:195px"></div>
<div class="cbx on" style="left:1213px;top:215px"><svg width="13" height="13" viewBox="0 0 13 13" style="position:absolute;left:0;top:0"><path d="M3.3 6.5 L5.3 8.4 L9.4 4.4" fill="none" stroke="#fff" stroke-width="1"/></svg></div>
<div class="btn" style="left:1229px;top:213px;width:20px;height:18px;line-height:16px;"><span class="m"><i>6</i></span></div>
<div class="edit" style="left:1254px;top:213px;width:119px;height:18px;line-height:17px;text-align:left;border-bottom:1px solid #8a8a8a"><span class="m" style="padding:0 1px"></span></div>
<div class="cbx" style="left:1376px;top:215px"></div>
<div class="cbx on" style="left:1213px;top:235px"><svg width="13" height="13" viewBox="0 0 13 13" style="position:absolute;left:0;top:0"><path d="M3.3 6.5 L5.3 8.4 L9.4 4.4" fill="none" stroke="#fff" stroke-width="1"/></svg></div>
<div class="btn" style="left:1229px;top:233px;width:20px;height:18px;line-height:16px;"><span class="m"><i>7</i></span></div>
<div class="edit" style="left:1254px;top:233px;width:119px;height:18px;line-height:17px;text-align:left;border-bottom:1px solid #8a8a8a"><span class="m" style="padding:0 1px"></span></div>
<div class="cbx" style="left:1376px;top:235px"></div>
<div class="cbx on" style="left:1213px;top:255px"><svg width="13" height="13" viewBox="0 0 13 13" style="position:absolute;left:0;top:0"><path d="M3.3 6.5 L5.3 8.4 L9.4 4.4" fill="none" stroke="#fff" stroke-width="1"/></svg></div>
<div class="btn" style="left:1229px;top:253px;width:20px;height:18px;line-height:16px;"><span class="m"><i>8</i></span></div>
<div class="edit" style="left:1254px;top:253px;width:119px;height:18px;line-height:17px;text-align:left;border-bottom:1px solid #8a8a8a"><span class="m" style="padding:0 1px"></span></div>
<div class="cbx" style="left:1376px;top:255px"></div>
<div class="cbx on" style="left:1213px;top:275px"><svg width="13" height="13" viewBox="0 0 13 13" style="position:absolute;left:0;top:0"><path d="M3.3 6.5 L5.3 8.4 L9.4 4.4" fill="none" stroke="#fff" stroke-width="1"/></svg></div>
<div class="btn" style="left:1229px;top:273px;width:20px;height:18px;line-height:16px;"><span class="m"><i>9</i></span></div>
<div class="edit" style="left:1254px;top:273px;width:119px;height:18px;line-height:17px;text-align:left;border-bottom:1px solid #8a8a8a"><span class="m" style="padding:0 1px"></span></div>
<div class="cbx" style="left:1376px;top:275px"></div>
<div class="cbx on" style="left:1213px;top:295px"><svg width="13" height="13" viewBox="0 0 13 13" style="position:absolute;left:0;top:0"><path d="M3.3 6.5 L5.3 8.4 L9.4 4.4" fill="none" stroke="#fff" stroke-width="1"/></svg></div>
<div class="btn" style="left:1229px;top:293px;width:20px;height:18px;line-height:16px;"><span class="m"><i>1</i><i>0</i></span></div>
<div class="edit" style="left:1254px;top:293px;width:119px;height:18px;line-height:17px;text-align:left;border-bottom:1px solid #8a8a8a"><span class="m" style="padding:0 1px"></span></div>
<div class="cbx" style="left:1376px;top:295px"></div>
<div class="cbx on" style="left:1213px;top:315px"><svg width="13" height="13" viewBox="0 0 13 13" style="position:absolute;left:0;top:0"><path d="M3.3 6.5 L5.3 8.4 L9.4 4.4" fill="none" stroke="#fff" stroke-width="1"/></svg></div>
<div class="btn" style="left:1229px;top:313px;width:20px;height:18px;line-height:16px;"><span class="m"><i>1</i><i>1</i></span></div>
<div class="edit" style="left:1254px;top:313px;width:119px;height:18px;line-height:17px;text-align:left;border-bottom:1px solid #8a8a8a"><span class="m" style="padding:0 1px"></span></div>
<div class="cbx" style="left:1376px;top:315px"></div>
<div class="cbx on" style="left:1213px;top:335px"><svg width="13" height="13" viewBox="0 0 13 13" style="position:absolute;left:0;top:0"><path d="M3.3 6.5 L5.3 8.4 L9.4 4.4" fill="none" stroke="#fff" stroke-width="1"/></svg></div>
<div class="btn" style="left:1229px;top:333px;width:20px;height:18px;line-height:16px;"><span class="m"><i>1</i><i>2</i></span></div>
<div class="edit" style="left:1254px;top:333px;width:119px;height:18px;line-height:17px;text-align:left;border-bottom:1px solid #8a8a8a"><span class="m" style="padding:0 1px"></span></div>
<div class="cbx" style="left:1376px;top:335px"></div>
<div class="cbx on" style="left:1213px;top:355px"><svg width="13" height="13" viewBox="0 0 13 13" style="position:absolute;left:0;top:0"><path d="M3.3 6.5 L5.3 8.4 L9.4 4.4" fill="none" stroke="#fff" stroke-width="1"/></svg></div>
<div class="btn" style="left:1229px;top:353px;width:20px;height:18px;line-height:16px;"><span class="m"><i>1</i><i>3</i></span></div>
<div class="edit" style="left:1254px;top:353px;width:119px;height:18px;line-height:17px;text-align:left;border-bottom:1px solid #8a8a8a"><span class="m" style="padding:0 1px"></span></div>
<div class="cbx" style="left:1376px;top:355px"></div>
<div class="cbx on" style="left:1213px;top:375px"><svg width="13" height="13" viewBox="0 0 13 13" style="position:absolute;left:0;top:0"><path d="M3.3 6.5 L5.3 8.4 L9.4 4.4" fill="none" stroke="#fff" stroke-width="1"/></svg></div>
<div class="btn" style="left:1229px;top:373px;width:20px;height:18px;line-height:16px;"><span class="m"><i>1</i><i>4</i></span></div>
<div class="edit" style="left:1254px;top:373px;width:119px;height:18px;line-height:17px;text-align:left;border-bottom:1px solid #8a8a8a"><span class="m" style="padding:0 1px"></span></div>
<div class="cbx" style="left:1376px;top:375px"></div>
<div class="cbx on" style="left:1213px;top:395px"><svg width="13" height="13" viewBox="0 0 13 13" style="position:absolute;left:0;top:0"><path d="M3.3 6.5 L5.3 8.4 L9.4 4.4" fill="none" stroke="#fff" stroke-width="1"/></svg></div>
<div class="btn" style="left:1229px;top:393px;width:20px;height:18px;line-height:16px;"><span class="m"><i>1</i><i>5</i></span></div>
<div class="edit" style="left:1254px;top:393px;width:119px;height:18px;line-height:17px;text-align:left;border-bottom:1px solid #8a8a8a"><span class="m" style="padding:0 1px"></span></div>
<div class="cbx" style="left:1376px;top:395px"></div>
<div class="cbx on" style="left:1213px;top:415px"><svg width="13" height="13" viewBox="0 0 13 13" style="position:absolute;left:0;top:0"><path d="M3.3 6.5 L5.3 8.4 L9.4 4.4" fill="none" stroke="#fff" stroke-width="1"/></svg></div>
<div class="btn" style="left:1229px;top:413px;width:20px;height:18px;line-height:16px;"><span class="m"><i>1</i><i>6</i></span></div>
<div class="edit" style="left:1254px;top:413px;width:119px;height:18px;line-height:17px;text-align:left;border-bottom:1px solid #8a8a8a"><span class="m" style="padding:0 1px"></span></div>
<div class="cbx" style="left:1376px;top:415px"></div>
<div class="cbx on" style="left:1213px;top:435px"><svg width="13" height="13" viewBox="0 0 13 13" style="position:absolute;left:0;top:0"><path d="M3.3 6.5 L5.3 8.4 L9.4 4.4" fill="none" stroke="#fff" stroke-width="1"/></svg></div>
<div class="btn" style="left:1229px;top:433px;width:20px;height:18px;line-height:16px;"><span class="m"><i>1</i><i>7</i></span></div>
<div class="edit" style="left:1254px;top:433px;width:119px;height:18px;line-height:17px;text-align:left;border-bottom:1px solid #8a8a8a"><span class="m" style="padding:0 1px"></span></div>
<div class="cbx" style="left:1376px;top:435px"></div>
<div class="cbx on" style="left:1213px;top:455px"><svg width="13" height="13" viewBox="0 0 13 13" style="position:absolute;left:0;top:0"><path d="M3.3 6.5 L5.3 8.4 L9.4 4.4" fill="none" stroke="#fff" stroke-width="1"/></svg></div>
<div class="btn" style="left:1229px;top:453px;width:20px;height:18px;line-height:16px;"><span class="m"><i>1</i><i>8</i></span></div>
<div class="edit" style="left:1254px;top:453px;width:119px;height:18px;line-height:17px;text-align:left;border-bottom:1px solid #8a8a8a"><span class="m" style="padding:0 1px"></span></div>
<div class="cbx" style="left:1376px;top:455px"></div>
<div class="cbx on" style="left:1213px;top:475px"><svg width="13" height="13" viewBox="0 0 13 13" style="position:absolute;left:0;top:0"><path d="M3.3 6.5 L5.3 8.4 L9.4 4.4" fill="none" stroke="#fff" stroke-width="1"/></svg></div>
<div class="btn" style="left:1229px;top:473px;width:20px;height:18px;line-height:16px;"><span class="m"><i>1</i><i>9</i></span></div>
<div class="edit" style="left:1254px;top:473px;width:119px;height:18px;line-height:17px;text-align:left;border-bottom:1px solid #8a8a8a"><span class="m" style="padding:0 1px"></span></div>
<div class="cbx" style="left:1376px;top:475px"></div>
<div class="cbx on" style="left:1213px;top:495px"><svg width="13" height="13" viewBox="0 0 13 13" style="position:absolute;left:0;top:0"><path d="M3.3 6.5 L5.3 8.4 L9.4 4.4" fill="none" stroke="#fff" stroke-width="1"/></svg></div>
<div class="btn" style="left:1229px;top:493px;width:20px;height:18px;line-height:16px;"><span class="m"><i>2</i><i>0</i></span></div>
<div class="edit" style="left:1254px;top:493px;width:119px;height:18px;line-height:17px;text-align:left;border-bottom:1px solid #8a8a8a"><span class="m" style="padding:0 1px"></span></div>
<div class="cbx" style="left:1376px;top:495px"></div>
<div style="left:1398px;top:130px;width:1px;height:36px;background:#888"></div>
<div class="cbx" style="left:1213px;top:530px"></div>
<div class="u" style="left:1229px;top:530px;font-size:12px">关闭提示</div>
<div class="btn" style="left:1214px;top:551px;width:90px;height:16px;line-height:14px;font-size:12px"><span class="u">清空全部数据</span></div>
<div class="btn" style="left:1214px;top:572px;width:90px;height:17px;line-height:15px;font-size:12px"><span class="u">自动循环发送</span></div>
<div style="left:328px;top:495px;width:875px;height:97px;border:1px solid #dcdcdc;box-shadow:inset 1px 1px 0 #fff"></div>
<div style="left:335px;top:489px;width:63px;height:12px;background:#f0f0f0"></div>
<div class="u" style="left:337px;top:488px;font-size:12px">发送缓冲区</div>
<div class="rad" style="left:336px;top:505px"></div>
<div class="u" style="left:351px;top:504px;font-size:12px">文本模式</div>
<div class="rad on" style="left:336px;top:520px"></div>
<div class="u" style="left:351px;top:520px;font-size:12px"><span class="m"><i><b style="transform:scaleX(0.734)">H</b></i><i><b style="transform:scaleX(0.868)">E</b></i><i><b style="transform:scaleX(0.734)">X</b></i></span>模式</div>
<div class="btn" style="left:338px;top:537px;width:76px;height:16px;line-height:14px;font-size:12px"><span class="u">清空发送区</span></div>
<div style="left:422px;top:504px;width:774px;height:63px;background:#fff;border-bottom:1px solid #8a8a8a"></div>
<div style="left:1178px;top:505px;width:17px;height:61px;background:#f2f2f2"></div>
<svg style="position:absolute;left:1181px;top:510px" width="10" height="7"><path d="M0 7 L5 0 L10 7Z" fill="#a8a8a8"/></svg>
<svg style="position:absolute;left:1181px;top:554px" width="10" height="7"><path d="M0 0 L5 7 L10 0Z" fill="#a8a8a8"/></svg>
<div class="m" style="left:424px;top:505px;"><i>4</i><i>7</i><i>&nbsp;</i><i>6</i><i>5</i><i>&nbsp;</i><i>6</i><i><b style="transform:scaleX(0.868)">E</b></i><i>&nbsp;</i><i>7</i><i>4</i><i>&nbsp;</i><i>6</i><i><b style="transform:scaleX(0.795)">C</b></i><i>&nbsp;</i><i>6</i><i>5</i><i>&nbsp;</i><i>6</i><i><b style="transform:scaleX(0.734)">D</b></i><i>&nbsp;</i><i>6</i><i>1</i><i>&nbsp;</i><i>6</i><i><b style="transform:scaleX(0.868)">E</b></i></div>
<div class="btn" style="left:338px;top:571px;width:52px;height:17px;line-height:15px;font-size:12px"><span class="u">发送文件</span></div>
<div class="btn" style="left:396px;top:571px;width:52px;height:17px;line-height:15px;font-size:12px"><span class="u">发送回车</span></div>
<div class="btn" style="left:454px;top:571px;width:52px;height:17px;line-height:15px;font-size:12px"><span class="u">发送数据</span></div>
<div class="btn" style="left:511px;top:571px;width:53px;height:17px;line-height:15px;font-size:12px"><span class="u">自动发送</span></div>
<div class="u" style="left:576px;top:574px;font-size:12px">周期<span class="m"><i>(</i><i><b style="transform:scaleX(0.681)">m</b></i><i>s</i><i>)</i></span></div>
<div class="edit" style="left:627px;top:572px;width:26px;height:16px;line-height:15px;text-align:center;border-bottom:1px solid #8a8a8a"><span class="m" style="padding:0 0px"><i>1</i><i>0</i><i>0</i></span></div>
<div class="u" style="left:334px;top:604px;font-size:12px">串口</div>
<div class="combo" style="left:362px;top:601px;width:58px;height:19px;line-height:17px;"><span class="m" style="position:absolute;left:4px;top:0px"><i><b style="transform:scaleX(0.795)">C</b></i><i><b style="transform:scaleX(0.734)">O</b></i><i><b style="transform:scaleX(0.596)">M</b></i><i>7</i></span><svg style="position:absolute;right:4px;top:6px" width="10" height="6" viewBox="0 0 10 6"><path d="M0.5 0.5 L5 5 L9.5 0.5" fill="none" stroke="#606060" stroke-width="1.1"/></svg></div>
<div class="u" style="left:438px;top:604px;font-size:12px">波特率</div>
<div class="combo" style="left:476px;top:601px;width:70px;height:19px;line-height:17px;border-color:#8e8e8e"><span class="m" style="position:absolute;left:4px;top:0px"><i>1</i><i>1</i><i>5</i><i>2</i><i>0</i><i>0</i></span><svg style="position:absolute;right:4px;top:6px" width="10" height="6" viewBox="0 0 10 6"><path d="M0.5 0.5 L5 5 L9.5 0.5" fill="none" stroke="#606060" stroke-width="1.1"/></svg></div>
<div class="u" style="left:553px;top:604px;font-size:12px">校验位</div>
<div class="combo" style="left:592px;top:601px;width:63px;height:19px;line-height:17px;font-size:12px"><span class="u" style="position:absolute;left:4px;top:1px">无校验</span><svg style="position:absolute;right:4px;top:6px" width="10" height="6" viewBox="0 0 10 6"><path d="M0.5 0.5 L5 5 L9.5 0.5" fill="none" stroke="#606060" stroke-width="1.1"/></svg></div>
<div class="u" style="left:663px;top:604px;font-size:12px">停止位</div>
<div class="combo" style="left:702px;top:601px;width:58px;height:19px;line-height:17px;font-size:12px"><span class="u" style="position:absolute;left:4px;top:1px">1位</span><svg style="position:absolute;right:4px;top:6px" width="10" height="6" viewBox="0 0 10 6"><path d="M0.5 0.5 L5 5 L9.5 0.5" fill="none" stroke="#606060" stroke-width="1.1"/></svg></div>
<div class="btn" style="left:330px;top:628px;width:62px;height:27px;line-height:25px;font-size:12px"><span class="u">打开串口</span></div>
<div class="cbx on" style="left:398px;top:628px"><svg width="13" height="13" viewBox="0 0 13 13" style="position:absolute;left:0;top:0"><path d="M3.3 6.5 L5.3 8.4 L9.4 4.4" fill="none" stroke="#fff" stroke-width="1"/></svg></div>
<div class="u" style="left:414px;top:628px;font-size:12px">编程完成后自动打开串口</div>
<div class="cbx" style="left:398px;top:644px"></div>
<div class="u" style="left:414px;top:644px;font-size:12px">自动发送结束符</div>
<div class="btn" style="left:555px;top:628px;width:61px;height:27px;line-height:25px;font-size:12px"><span class="u">更多设置</span></div>
<div class="u" style="left:634px;top:627px;font-size:12px">发送</div>
<div class="edit" style="left:661px;top:627px;width:48px;height:14px;line-height:13px;text-align:right;background:#ececec;border:1px solid #e2e2e2;border-bottom:1px solid #8a8a8a;font-size:11.5px"><span class="u" style="padding:0 3px">0</span></div>
<div class="u" style="left:634px;top:644px;font-size:12px">接收</div>
<div class="edit" style="left:661px;top:645px;width:48px;height:14px;line-height:13px;text-align:right;background:#ececec;border:1px solid #e2e2e2;border-bottom:1px solid #8a8a8a;font-size:11.5px"><span class="u" style="padding:0 3px">1358</span></div>
<div class="btn" style="left:716px;top:643px;width:37px;height:16px;line-height:14px;font-size:12px"><span class="u">清零</span></div>
<div style="left:313px;top:676px;width:1109px;height:1px;background:#cfe0ec"></div>
<div style="left:313px;top:681px;width:1109px;height:289px;background:#fff;border-top:1px solid #7a7a7a;border-left:1px solid #7a7a7a"></div>
<div style="left:1406px;top:682px;width:16px;height:288px;background:#f2f2f2"></div>
<div style="left:1413px;top:890px;width:2px;height:62px;background:#888"></div>
<div class="u" style="left:326px;top:684px;font-size:12px">固件版本号：<span class="m"><i>7</i><i>.</i><i>4</i><i>.</i><i>5</i><i><b style="transform:scaleX(0.734)">U</b></i></span></div>
<div class="u" style="left:326px;top:716px;font-size:12px"><span class="m"><i>.</i><i>&nbsp;</i></span>用户设定频率：<span class="m"><i>2</i><i>4</i><i>.</i><i>0</i><i>0</i><i>0</i><i><b style="transform:scaleX(0.596)">M</b></i><i><b style="transform:scaleX(0.734)">H</b></i><i>z</i></span></div>
<div class="u" style="left:326px;top:732px;font-size:12px"><span class="m"><i>.</i><i>&nbsp;</i></span>调节后的频率：<span class="m"><i>2</i><i>4</i><i>.</i><i>0</i><i>0</i><i>2</i><i><b style="transform:scaleX(0.596)">M</b></i><i><b style="transform:scaleX(0.734)">H</b></i><i>z</i><i>&nbsp;</i><i>(</i><i>&nbsp;</i></span>主时钟分频系数<span class="m"><i>&nbsp;</i><i><b style="transform:scaleX(0.94)">=</b></i><i>&nbsp;</i><i>1</i><i>;</i><i>&nbsp;</i><i>)</i></span></div>
<div class="u" style="left:326px;top:748px;font-size:12px"><span class="m"><i>.</i><i>&nbsp;</i></span>频率调节误差：<span class="m"><i>0</i><i>.</i><i>0</i><i>1</i><i>0</i><i><b style="transform:scaleX(0.636)">%</b></i></span></div>
<div class="u" style="left:315px;top:796px;font-size:12px">操作成功<span class="m"><i>&nbsp;</i><i>!</i><i>(</i><i>2</i><i>0</i><i>2</i><i>4</i><i>-</i><i>0</i><i>3</i><i>-</i><i>2</i><i>5</i><i>&nbsp;</i><i>0</i><i>8</i><i>:</i><i>3</i><i>6</i><i>:</i><i>1</i><i>9</i><i>)</i></span></div>
<div class="edit" style="left:313px;top:978px;width:1109px;height:19px;line-height:18px;text-align:left;background:#f3f3f3;border-bottom:1px solid #777;border-top:1px solid #e4e4e4;border-right:1px solid #e4e4e4;border-left:1px solid #e4e4e4"><span class="m" style="padding:0 2px"><i><b style="transform:scaleX(0.734)">D</b></i><i>:</i><i>\</i><i><b style="transform:scaleX(0.734)">w</b></i><i>o</i><i>r</i><i>k</i><i>\</i><i><b style="transform:scaleX(0.596)">M</b></i><i><b style="transform:scaleX(0.795)">C</b></i><i><b style="transform:scaleX(0.734)">U</b></i><i>\</i><i>5</i><i>1</i><i>\</i><i>2</i><i>5</i><i>1</i><i>\</i><i><b style="transform:scaleX(0.953)">F</b></i><i><b style="transform:scaleX(0.795)">R</b></i><i><b style="transform:scaleX(0.868)">E</b></i><i><b style="transform:scaleX(0.868)">E</b></i><i><b style="transform:scaleX(0.795)">R</b></i><i><b style="transform:scaleX(0.868)">T</b></i><i><b style="transform:scaleX(0.734)">O</b></i><i><b style="transform:scaleX(0.953)">S</b></i><i>\</i><i><b style="transform:scaleX(0.953)">S</b></i><i><b style="transform:scaleX(0.868)">T</b></i><i><b style="transform:scaleX(0.795)">C</b></i><i style="width:12px">移</i><i style="width:12px">植</i><i>\</i><i><b style="transform:scaleX(0.953)">F</b></i><i>r</i><i>e</i><i>e</i><i><b style="transform:scaleX(0.795)">R</b></i><i><b style="transform:scaleX(0.868)">T</b></i><i><b style="transform:scaleX(0.734)">O</b></i><i><b style="transform:scaleX(0.953)">S</b></i><i>-</i><i><b style="transform:scaleX(0.953)">S</b></i><i><b style="transform:scaleX(0.868)">T</b></i><i><b style="transform:scaleX(0.795)">C</b></i><i>3</i><i>2</i><i><b style="transform:scaleX(0.734)">G</b></i><i>-</i><i><b style="transform:scaleX(0.795)">C</b></i><i><b style="transform:scaleX(0.734)">O</b></i><i><b style="transform:scaleX(0.795)">R</b></i><i><b style="transform:scaleX(0.868)">E</b></i><i>-</i><i><b style="transform:scaleX(0.734)">V</b></i><i>1</i><i>.</i><i>0</i><i>.</i><i>2</i><i>-</i><i><b style="transform:scaleX(0.868)">L</b></i><i>i</i><i>b</i><i>r</i><i>a</i><i>r</i><i>y</i><i>-</i><i><b style="transform:scaleX(0.734)">D</b></i><i>e</i><i><b style="transform:scaleX(0.681)">m</b></i><i>o</i><i><b style="transform:scaleX(0.795)">C</b></i><i>o</i><i>d</i><i>e</i><i>-</i><i>n</i><i>o</i><i>I</i><i>n</i><i>t</i><i>e</i><i>r</i><i>r</i><i>u</i><i>p</i><i>t</i><i>\</i><i><b style="transform:scaleX(0.734)">O</b></i><i>b</i><i>j</i><i>e</i><i>c</i><i>t</i><i>s</i><i>\</i><i><b style="transform:scaleX(0.953)">F</b></i><i>r</i><i>e</i><i>e</i><i><b style="transform:scaleX(0.795)">R</b></i><i><b style="transform:scaleX(0.868)">T</b></i><i><b style="transform:scaleX(0.734)">O</b></i><i><b style="transform:scaleX(0.953)">S</b></i><i>_</i><i><b style="transform:scaleX(0.734)">D</b></i><i>e</i><i><b style="transform:scaleX(0.681)">m</b></i><i>o</i><i>.</i><i>h</i><i>e</i><i>x</i></span></div>
<div class="btn" style="left:315px;top:1005px;width:76px;height:21px;line-height:19px;font-size:12px"><span class="u">发布项目程序</span></div>
<div class="btn" style="left:399px;top:1005px;width:77px;height:21px;line-height:19px;font-size:12px"><span class="u">发布项目帮助</span></div>
<div class="btn" style="left:484px;top:1005px;width:87px;height:21px;line-height:19px;font-size:12px"><span class="u">读取本机硬盘号</span></div>
<div class="btn" style="left:579px;top:1005px;width:88px;height:21px;line-height:19px;font-size:12px"><span class="u">显示动态信息</span></div>
<div class="cbx" style="left:1228px;top:1008px"></div>
<div class="u" style="left:1244px;top:1008px;font-size:12px">提示音</div>
<div class="u" style="left:1295px;top:1008px;font-size:12px">成功计数</div>
<div class="edit" style="left:1344px;top:1006px;width:38px;height:18px;line-height:17px;text-align:center;background:#efefef;border-bottom:1px solid #9a9a9a;font-size:11.5px"><span class="u" style="padding:0 0px">2905</span></div>
<div class="btn" style="left:1385px;top:1007px;width:36px;height:16px;line-height:14px;font-size:12px"><span class="u">清零</span></div></body></html>
